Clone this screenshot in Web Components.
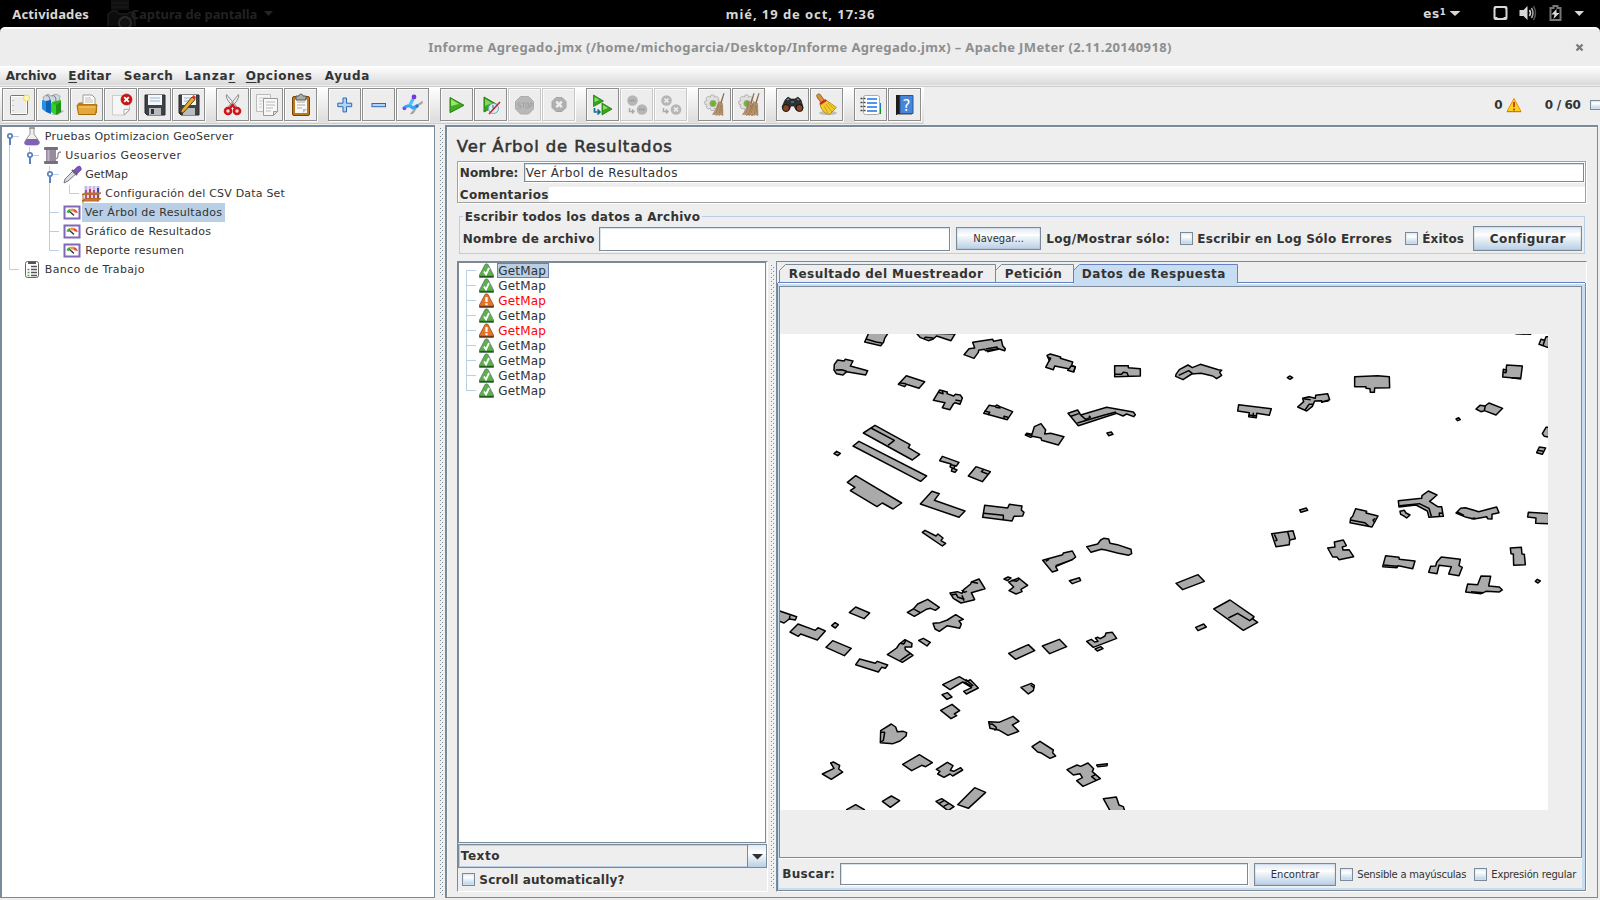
<!DOCTYPE html>
<html lang="es">
<head>
<meta charset="utf-8">
<title>Informe Agregado.jmx – Apache JMeter</title>
<style>
html,body{margin:0;width:1600px;height:900px;overflow:hidden;background:#000}
body{font:bold 12px/14px "DejaVu Sans",sans-serif;color:#333}
</style>
</head>
<body>
<desktop-bar></desktop-bar>
<jmeter-window></jmeter-window>
<script>
function define(name, css, html, init){
  const tpl=document.createElement('template');
  tpl.innerHTML='<style>:host{display:block;box-sizing:border-box}*{box-sizing:border-box}'+css+'</style>'+html;
  customElements.define(name,class extends HTMLElement{
    connectedCallback(){
      if(this.shadowRoot)return;
      this.attachShadow({mode:'open'}).appendChild(tpl.content.cloneNode(true));
      if(init)init(this,this.shadowRoot);
    }
  });
}

/* Text run fitted to an exact width by spreading its letters */
define('fit-text',':host{display:block;white-space:pre;flex:none}span{display:inline-block;margin-left:-.2px}','<span><slot></slot></span>',(el,root)=>{
  const w=+el.getAttribute('w'),x=el.getAttribute('x');
  el.style.width=w+'px';
  if(x)el.style.marginLeft=x+'px';
  const nat=root.querySelector('span').getBoundingClientRect().width;
  const n=el.textContent.length;
  el.style.letterSpacing=((w+.6-nat)/(n-1))+'px';
});

const gear='<path d="M14 7h3l.6 2.200 2.200-1 2 2-1 2.200 2.200.8v3l-2.200.8 1 2-2 2-2.200-.8-.6 2.300h-3l-.8-2.300-2.200.8-2-2 1-2-2.200-.8v-3l2.200-.8-1-2.200 2-2 2.200 1z" transform="translate(-1 0)" fill="#e0e0dc" stroke="#aaa" stroke-width=".8"/><circle cx="15" cy="15.500" r="3.200" fill="#68b825" stroke="#aaa" stroke-width=".8"/>';
const broom=(dx)=>`<g transform="translate(${dx} 0)"><path d="M25.500 5l1 .4-3.200 11-1.500-.5z" fill="#8a6a45"/><path d="M20.500 14l4 1.500.5 12-2.500-1-1 1-1.500-1-1.800 1-1-1.300-2.700.3c2.500-3 4.500-7 6-12.500z" fill="#b8946c" stroke="#8a6b4a" stroke-width=".5"/><path d="M21 16l-3 9M22.500 17l-1 8.500M23.700 17l.1 8" stroke="#8a6a46" stroke-width=".5"/></g>`;
const ICONS={
new:'<rect x="8.500" y="7.500" width="17" height="19" rx="1" fill="#ececec" stroke="#777"/><rect x="9.500" y="8.500" width="15" height="17" fill="none" stroke="#fff"/><path d="M11 12v1M11 17v1M11 22v1" stroke="#999"/><circle cx="24.500" cy="10" r="3" fill="#fdf6c4" stroke="#f0dd4a"/>',
templates:'<path d="M20 20l8 3-6 4h-6z" fill="#777" opacity=".5"/><path d="M7 9l5-3 3 2 5-2 4 2-1 6-8 3-7-4z" fill="#cfd8dc" stroke="#90a0a8" stroke-width=".8"/><path d="M10 8q4-2 4 6M16 8q4-2 4 6" stroke="#6f8088" stroke-width="1" fill="none"/><path d="M16 14l9-2v11l-6 3z" fill="#2ab81a"/><path d="M6 12l4 1v11l-4-3z" fill="#2a8fe0"/><path d="M10 13l5-1v14l-5-2z" fill="#0f62ba"/><path d="M15 15l5 2v10l-5-3z" fill="#35d02b"/><path d="M20 17l5-3v10l-5 3z" fill="#1d9213"/>',
open:'<path d="M13 17V7h9l3 3v9z" fill="#fff" stroke="#999"/><path d="M15 10h6M15 12h8M15 14h8" stroke="#bbb"/><path d="M8 15l4-1 1 2h14v9H8z" fill="#c58413"/><path d="M7 17h20l-1.500 9.500H8.500z" fill="#e5a63a" stroke="#a66a08"/><path d="M9 19h16" stroke="#f4cb79"/>',
close:'<path d="M8.500 7.500h17v15l-5 4.500h-12z" fill="#f6f6f6" stroke="#ccc"/><path d="M26 21l-6 .5V27z" fill="#fff" stroke="#aaa"/><circle cx="22.500" cy="11.500" r="5.500" fill="#cc1410" stroke="#a01010" stroke-width=".6"/><path d="M20.200 9.200l4.600 4.600M24.800 9.200l-4.600 4.600" stroke="#fff" stroke-width="1.900"/>',
save:'<path d="M7 7h20v20H9l-2-2z" fill="#3e4246" stroke="#26292b"/><rect x="10" y="7" width="14" height="10" fill="#f3f7fb"/><path d="M12 10h10M12 13h10" stroke="#9cb3ca"/><rect x="11" y="20" width="12" height="7" fill="#b9bcbf"/><rect x="13" y="21" width="3" height="5" fill="#333"/>',
saveas:'<path d="M7 7h20v20H9l-2-2z" fill="#3e4246" stroke="#26292b"/><rect x="10" y="7" width="14" height="10" fill="#f3f7fb"/><path d="M12 10h10M12 13h10" stroke="#9cb3ca"/><rect x="11" y="20" width="12" height="7" fill="#b9bcbf"/><path d="M8 26l2-5L20 9l3 2.500L12 24z" fill="#e4ab2e" stroke="#5d400b"/><path d="M20 9l1.500-2 2.500 2-1 2.500z" fill="#d33"/><path d="M8 26l.7-2 1.500 1z" fill="#000"/>',
cut:'<path d="M10.500 6.500c-1 3 2 8 8 13l2-1zM22.500 6.500c1 3-2 8-8 13l-2-1z" fill="#eee" stroke="#888"/><circle cx="12" cy="23" r="3" fill="#f6dada" stroke="#cf1517" stroke-width="2.600"/><circle cx="21" cy="23" r="3" fill="#f6dada" stroke="#cf1517" stroke-width="2.600"/><path d="M14 20l2.500-3 2.500 3" stroke="#cf1517" stroke-width="2.500" fill="none"/>',
copy:'<path d="M6.500 6.500h14v17h-14z" fill="#f5f5f5" stroke="#bbb"/><path d="M9 10h9M9 13h4M9 16h3M9 19h3" stroke="#ccc"/><path d="M13.500 10.500h14v13l-4 4h-10z" fill="#f7f7f7" stroke="#999"/><path d="M16 14h9M16 17h9M16 20h7M16 23h5" stroke="#bbb"/><path d="M27.500 23.500h-4v4z" fill="#ddd" stroke="#999"/>',
paste:'<rect x="8.500" y="8.500" width="17" height="19" rx="1.500" fill="#ba771b" stroke="#75450a"/><rect x="11" y="11" width="12" height="14" fill="#f8f8f8"/><path d="M13 14h8M13 17h8M13 20h5" stroke="#aaa"/><path d="M12 8h3c0-2.500 4-2.500 4 0h3v4H12z" fill="#aaa" stroke="#555"/><path d="M23 21h-4v4z" fill="#bbb"/>',
plus:'<path d="M15 10h3.500v5.200h5.200v3.500h-5.200v5.200H15v-5.200H9.800v-3.500H15z" fill="#b4d2f2" stroke="#2d69b3"/>',
minus:'<rect x="10" y="15.500" width="13.500" height="3.200" fill="#b4d2f2" stroke="#2d69b3"/>',
toggle:'<path d="M14 26c2-3 4-4 5-8l7-5q2 1 0 3l-4 2-4 7q-2 2-4 1z" fill="#a5a5a5"/><path d="M8 20q3-3 6-2l3 2 4-2" fill="none" stroke="#35a5ff" stroke-width="3.200" stroke-linecap="round"/><path d="M14 17l3-6" stroke="#4ec0ff" stroke-width="3.400"/><circle cx="18" cy="9" r="2.400" fill="#7437e5"/><circle cx="8.500" cy="20.500" r="1.800" fill="#8646e2"/><circle cx="21" cy="18" r="1.600" fill="#1e70e0"/>',
run:'<path d="M10 9.500l14 7.800-14 7.400z" fill="#3fae20" stroke="#287b10"/><path d="M11 11l8 5-8 2z" fill="#9be26b"/>',
runno:'<path d="M10 9l13.500 7.800L10 24z" fill="#3aa61d" stroke="#287b10"/><path d="M11 11l7 4-7 3z" fill="#85d65a"/><circle cx="19.500" cy="20.500" r="5" fill="#d9eef8" stroke="#6ab"/><path d="M19 17v3.500h2" fill="none" stroke="#367"/><path d="M15 26L26 14" stroke="#d12020" stroke-width="1.500"/>',
stop:'<path d="M12.500 8.500h8l5 5v7.500l-5 5h-8l-5-5v-7.500z" fill="#b8b8b8" stroke="#adadad"/><path d="M12.600 15H10v2.500h2.600V20H10M14 15h3M15.500 15v5M18 15h2.300v5H18zM22 20v-5h2v2.500h-2" stroke="#a0a0a0" stroke-width=".9" fill="none"/>',
shut:'<path d="M14 9.500h6l4 4v6l-4 4h-6l-4-4v-6z" fill="#b0b0b0" stroke="#a4a4a4"/><path d="M14.300 13.700l5.500 5.500M19.800 13.700l-5.500 5.500" stroke="#eee" stroke-width="2.500"/>',
remote:'<path d="M7.500 7l10 6-10 5.500zM16 15l10 6-10 6z" fill="#35a51b" stroke="#23780d" stroke-width=".8"/><path d="M8.500 9l5 3-5 2zM17 17l5 3-5 2z" fill="#8fdd62"/><path d="M8.500 20v4h5M11.500 21.500l2.500 2.500-2.500 2.500" fill="none" stroke="#14708a" stroke-width="1.700"/>',
rstop:'<circle cx="12.500" cy="12.500" r="5.300" fill="#b6b6b6"/><circle cx="22" cy="21.500" r="5.300" fill="#b6b6b6"/><path d="M9.500 12.500h6M19 21.500h6" stroke="#999" stroke-width="2" stroke-dasharray="1.200 .6"/><path d="M9.500 20v3.500h4M12 21.500l2 2-2 2" fill="none" stroke="#aaa" stroke-width="1.500"/>',
rshut:'<circle cx="12.500" cy="12.500" r="5.300" fill="#b6b6b6"/><circle cx="22" cy="21.500" r="5.300" fill="#b6b6b6"/><path d="M10.500 10.500l4 4M14.500 10.500l-4 4M20 19.500l4 4M24 19.500l-4 4" stroke="#eee" stroke-width="1.700"/><path d="M9.500 20v3.500h4M12 21.500l2 2-2 2" fill="none" stroke="#aaa" stroke-width="1.500"/>',
clear:gear+broom(0),
clearall:gear+broom(-4)+broom(1),
find:'<path d="M9 12l3-3 3 2h4l3-2 3 3 2 7-1 3h-6l-2-4h-3l-2 4H8l-2-3z" fill="#2d3133" stroke="#111" stroke-width=".6"/><circle cx="10" cy="20" r="3.500" fill="#864520" stroke="#111"/><circle cx="23.500" cy="20" r="3.500" fill="#864520" stroke="#111"/><path d="M11 12l2-1M21 11l2 1M15 14h3" stroke="#899" stroke-width="1.200"/>',
reset:'<ellipse cx="18" cy="25" rx="9" ry="2" fill="#bbb"/><path d="M6.500 7.500c1.500-2.500 4-1.500 4.500 0l3.500 5-3 2.500-4-5z" fill="#d99336" stroke="#8a5312" stroke-width=".8"/><path d="M10 16l6-4 10.500 7.500-7 7C14 25 11 22 10 16z" fill="#f4cb2c" stroke="#aa8209" stroke-width=".8"/><path d="M14 18l4 7M16 16l6 8M18 15l6 6" stroke="#b78f12" stroke-width=".7"/><path d="M10 16l6-4" stroke="#d3222a" stroke-width="2.500"/>',
func:'<path d="M24 15h3v5h-3z" fill="#1677ee"/><path d="M24 20h3v6h-3z" fill="#199024"/><rect x="9.500" y="7.500" width="16" height="19" rx="2" fill="#fff" stroke="#aaa"/><path d="M13 11h10M13 15h10M13 19h10M13 23h10" stroke="#1774ea" stroke-width="1.400"/><path d="M6.500 10.500h5M6.500 14.500h5M6.500 18.500h5M6.500 22.500h5" stroke="#444" stroke-width="1.700" stroke-dasharray="2 1"/>',
help:'<path d="M8 7h4v20H8z" fill="#1c1c1c"/><path d="M12 7.500h13v18H12z" fill="#4586d8" stroke="#28569a"/><path d="M9 26.500h15" stroke="#999"/><text x="14.500" y="22.500" font-size="15" font-family="DejaVu Sans" font-weight="400" fill="#fff">?</text>'
};
define('tool-button',':host{width:33px;height:33px;border:1px solid #8e8e8e;background:#ededed;box-shadow:1px 1px 0 #fff,inset 1px 1px 0 #fafafa;flex:none;margin-right:1px}:host([off]){border-color:#c8c8c8}svg{display:block;margin:-1px}','<svg width="33" height="33"></svg>',(el,r)=>{r.querySelector('svg').innerHTML=ICONS[el.getAttribute('icon')]});

define('desktop-bar',`:host{height:27px;background:#000;color:#d8d8d8;display:flex;align-items:center;font:bold 13px/20px "Noto Sans",sans-serif}
svg{flex:none}.ghost{color:#222}.kb{font:bold 12px/20px "DejaVu Sans",sans-serif}.kb span{position:relative;top:-3px;font-size:14px}`,`
<fit-text x="12.500" w="76">Actividades</fit-text>
<svg width="34" height="27" style="margin-left:17px"><path d="M5 0h18v10H5z" fill="#101010"/><path d="M5 3h18M5 7h18" stroke="#1c1c1c"/><path d="M2 26V14l4-3h5l2 3h8l3-2 5 1v13" fill="#0c0c0c" stroke="#262626"/><circle cx="19" cy="23" r="6" fill="#111" stroke="#2a2a2a" stroke-width="2"/></svg>
<fit-text class="ghost" x="-8.500" w="126">Captura de pantalla</fit-text>
<svg width="12" height="8" style="margin-left:6px"><path d="M1 1h9L5.500 6z" fill="#262626"/></svg>
<fit-text x="451" w="148">mié, 19 de oct, 17:36</fit-text>
<fit-text class="kb" x="549.500" w="22">es<span>₁</span></fit-text>
<svg width="154" height="27"><g fill="#d8d8d8" transform="translate(-.500 0)"><path d="M4 11h11l-5.500 5z"/><path fill-rule="evenodd" d="M50 6h10a2 2 0 012 2v10a2 2 0 01-2 2H50a2 2 0 01-2-2V8a2 2 0 012-2zm0 3v8h2v1h6v-1h2V9l-1-1h-8z"/><path d="M74 10h4l4-4v14l-4-4h-4z"/><path d="M84 10q2 3 0 6" stroke="#d8d8d8" stroke-width="1.500" fill="none"/><path d="M86 8q3 5 0 10" stroke="#aaa" stroke-width="1.500" fill="none"/><path d="M88 6q4 7 0 14" stroke="#555" stroke-width="1.500" fill="none"/><path d="M105 8h3V6h4v2h3v12h-10z" fill="none" stroke="#777" stroke-width="2"/><path d="M111 9l-5 5.500h3L108 19l6-6h-3z"/><path d="M129 11h9.500l-4.750 5z"/></g></svg>`);

define('window-title',`:host{height:39px;background:#ededed;border-top:2px solid #fff;border-radius:5px 5px 0 0;display:flex;align-items:center;color:#8d8f8f;font:bold 13px/18px "Noto Sans",sans-serif;padding-bottom:1px}svg{margin-left:404px}`,`
<fit-text x="428.500" w="742.500">Informe Agregado.jmx (/home/michogarcia/Desktop/Informe Agregado.jmx) – Apache JMeter (2.11.20140918)</fit-text>
<svg width="9" height="9"><path d="M1.500 1.500l6 6M7.500 1.500l-6 6" stroke="#777a7a" stroke-width="2.300"/></svg>`);

define('menu-strip',`:host{height:21px;background:linear-gradient(#fff,#dadada 19px,#eee 19px,#eee 20px,#ccc 20px);display:flex;align-items:center;padding-bottom:2px}u{text-underline-offset:2px;text-decoration-thickness:1px}`,`
<fit-text x="6" w="50">Archivo</fit-text><fit-text x="12.500" w="42"><u>E</u>ditar</fit-text><fit-text x="13.500" w="48.500">Search</fit-text><fit-text x="12.500" w="49">Lanza<u>r</u></fit-text><fit-text x="12" w="65.500"><u>O</u>pciones</fit-text><fit-text x="13.500" w="44">Ayuda</fit-text>`);

define('tool-strip',`:host{height:38px;background:#eee;display:flex;justify-content:space-between}
.bar{width:924px;height:37px;padding:1px 0 0 2px;display:flex;background:linear-gradient(#fff,#dcdcdc 35px,#fff 35px,#ccc 36px)}
i{width:10px;flex:none}.st{display:flex;align-items:center;height:37px;width:106px;overflow:hidden;padding-bottom:1px}
check-box{margin-left:9.500px;height:10px;margin-top:-1px}svg{flex:none;margin:-1px 0 0 3px}`,`
<div class="bar">${['new templates open close save saveas','cut copy paste','plus minus toggle','run runno -stop -shut','remote -rstop -rshut','clear clearall','find reset','func help'].map(g=>g.split(' ').map(n=>`<tool-button icon="${n.replace('-','')}"${n[0]=='-'?' off':''}></tool-button>`).join('')).join('<i></i>')}</div>
<div class="st"><fit-text x=".500" w="8">0</fit-text><svg width="16" height="16"><path d="M8 1.500L15 14.500H1z" fill="#ffd21c" stroke="#ee8a10" stroke-linejoin="round"/><path d="M1 14.700h14" stroke="#df6a08"/><path d="M8 5v5M8 11.500v2" stroke="#c84a06" stroke-width="2"/></svg><fit-text x="23.500" w="35.500">0 / 60</fit-text><check-box></check-box></div>`);

define('check-box',':host{width:13px;height:13px;border:1px solid #7a8a99;flex:none;background:linear-gradient(#dfeaf4,#fff 30%,#b8cfe5);box-shadow:inset 0 0 0 1px #dce8f388}','');
define('metal-button',':host{border:1px solid #7a8a99;flex:none;display:flex;align-items:center;justify-content:center;background:linear-gradient(#dfe9f3,#fff 35%,#f4f8fb 40%,#b8cfe5);box-shadow:inset 0 0 0 1px #7a8a9922}','<slot></slot>');
define('text-field',':host{border:1px solid #7a8a99;background:#fff;flex:none;display:flex;align-items:center;box-shadow:1px 1px 0 #fff,inset 1px 1px 0 #d8e2ec;font-weight:400}','<slot></slot>');
define('split-grip',`:host{flex:none;background:#eee}svg{display:block;width:4px;height:100%}`,'<svg><defs><pattern id="b" width="4" height="4" patternUnits="userSpaceOnUse"><path d="M1 1h1v1H1zM3 3h1v1H3z" fill="#fff"/><path d="M0 0h1v1H0zM2 2h1v1H2z" fill="#7a8a99"/></pattern></defs><rect width="4" height="100%" fill="url(#b)"/></svg>');

const gauge='<rect x="1.500" y="3.500" width="15" height="12" fill="#fff" stroke="#8068b8" stroke-width="2"/><path d="M3.500 9.500q.5-3 3.500-3.500l.5 2-2 2z" fill="#38b038"/><path d="M7 6q2-1 4.500 0L10 8.500H8z" fill="#f0943a"/><path d="M11.500 6q2.500 1 3.500 4l-3-.5-2-1.500z" fill="#e84c3a"/><path d="M6.500 8.500l4 3.500M8.500 10l2.500 2.500" stroke="#333" stroke-width="1.200"/>';
const TI={
flask:'<path d="M7 1v6L1.500 15q0 3 3 3h9q3 0 3-3L11 7V1z" fill="#eee" stroke="#999"/><path d="M3.500 12h11l2 4q-1 2-3 2h-9q-3 0-3-2z" fill="#8061b5"/><path d="M6 1h6" stroke="#777"/>',
spool:'<rect x="1" y="1" width="14" height="3" rx="1" fill="#776e7c"/><rect x="3" y="4" width="10" height="11" fill="#978c9e"/><path d="M5.500 4v11" stroke="#c0b5c6" stroke-width="2"/><rect x="1" y="15" width="14" height="3" rx="1" fill="#776e7c"/><path d="M12 13q3 0 3-4 0-3 3-3" fill="none" stroke="#938a99" stroke-width="1.300"/>',
drop:'<path d="M1 18l1-4L11 5l3 3-9 8z" fill="#dcd9e8" stroke="#777"/><path d="M9 5l5 5" stroke="#666" stroke-width="2"/><path d="M11 5l3-3q3-2 4 .5T17 6l-3 3z" fill="#7b55bb" stroke="#5c3ba0" stroke-width=".6"/>',
tubes:'<path d="M4 2v12M8 2v12M12 2v12M16 2v12" stroke="#c8b8e2" stroke-width="3"/><path d="M4 6v8" stroke="#8c60bb" stroke-width="2"/><path d="M8 5v9" stroke="#d8345c" stroke-width="2"/><path d="M12 6v8" stroke="#b34c9b" stroke-width="2"/><path d="M16 4v10" stroke="#3744c8" stroke-width="2"/><path d="M0 10.500l3-1.500h16l-3 1.500zM0 17l3-2.500h16L16 17z" fill="#cc7829" stroke="#b8682a"/><path d="M1 10v9M16 10v8" stroke="#b96520"/>',
gauge,
bench:'<rect x="2.500" y="1.500" width="13" height="16" rx="2" fill="#fff" stroke="#666"/><path d="M5 3h8" stroke="#555" stroke-width="2"/><path d="M8 6.500h6M8 9.500h6M8 12.500h6M8 15.500h6" stroke="#555" stroke-width="1.300"/><path d="M4.500 9.500h2M4.500 12.500h2M4.500 15.500h2" stroke="#55a555" stroke-width="1.500"/>'
};
define('tree-row',`:host{height:19px;display:flex;align-items:center;font:11px/15px "DejaVu Sans",sans-serif}svg{flex:none}div{height:19px;display:flex;align-items:center;padding:0 3.500px 0 1.500px}:host([sel]) div{background:#b8cfe5}`,'<svg width="19" height="19"></svg><div><slot></slot></div>',(el,r)=>{
 el.style.paddingLeft=el.getAttribute('pad')+'px';r.querySelector('svg').innerHTML=TI[el.getAttribute('icon')];
});
define('plan-tree',`:host{width:435px;height:773px;border:1px solid #7a8a99;border-width:2px 1px 1px 2px;background:#fff;position:relative}
.g{position:absolute;left:-2px;top:-2px}.r{position:relative}`,`
<svg class="g" width="90" height="160"><g stroke="#b8cfe5" fill="none"><path d="M9.500 14v130.500H19M12 11.500h7M29.500 22v10M32 30.500h7M49.500 41v84.500H59M52 49.500h7M49.500 87.500H59M49.500 106.500H59M69.500 60v8.500H79"/></g><g fill="#fff" stroke="#5b82c0" stroke-width="1.700"><path d="M10 13v7M30 32v7M50 51v7" stroke-width="2"/><circle cx="10" cy="11" r="2.200"/><circle cx="30" cy="30" r="2.200"/><circle cx="50" cy="49" r="2.200"/></g></svg>
<div class="r">
<tree-row pad="21" icon="flask"><fit-text x="1.500" w="188">Pruebas Optimizacion GeoServer</fit-text></tree-row>
<tree-row pad="41" icon="spool"><fit-text x="2" w="115">Usuarios Geoserver</fit-text></tree-row>
<tree-row pad="61" icon="drop"><fit-text x="2" w="42">GetMap</fit-text></tree-row>
<tree-row pad="80" icon="tubes"><fit-text x="3" w="179">Configuración del CSV Data Set</fit-text></tree-row>
<tree-row pad="61" sel icon="gauge"><fit-text x="1.500" w="136.500">Ver Árbol de Resultados</fit-text></tree-row>
<tree-row pad="61" icon="gauge"><fit-text x="2" w="125">Gráfico de Resultados</fit-text></tree-row>
<tree-row pad="61" icon="gauge"><fit-text x="2" w="98">Reporte resumen</fit-text></tree-row>
<tree-row pad="21" icon="bench"><fit-text x="1.500" w="99">Banco de Trabajo</fit-text></tree-row></div>`);

define('name-box',`:host{height:42px;border:1px solid #a0a0a0;box-shadow:1px 1px 0 #fff,inset 1px 1px 0 #fff;padding-top:1px}
.n{display:flex;height:19px;align-items:center;padding-left:2px}.c{display:flex;height:15px;margin-top:5px;padding-left:2px;align-items:center}
text-field{height:19px;width:1060px;margin-left:6px}.w{background:#fff;height:15px;flex:1;margin-left:1px}`,`
<div class="n"><fit-text w="58">Nombre:</fit-text><text-field><fit-text x="1" w="151">Ver Árbol de Resultados</fit-text></text-field></div>
<div class="c"><fit-text w="88">Comentarios</fit-text><div class="w"></div></div>`);

define('file-box',`:host{height:38px;border:1px solid #b8cfe5;position:relative;padding:9px 0 0 3px}
.l{position:absolute;left:3px;top:-7px;background:#eee;padding:0 2px}.r{display:flex;align-items:center;height:25px}.s{font:10px/13px "DejaVu Sans",sans-serif}`,`
<div class="l"><fit-text w="234.500">Escribir todos los datos a Archivo</fit-text></div>
<div class="r"><fit-text w="131">Nombre de archivo</fit-text><text-field style="width:351px;height:24px;margin-left:5px"></text-field>
<metal-button class="s" style="width:85px;height:23px;margin-left:6px"><fit-text w="50">Navegar...</fit-text></metal-button>
<fit-text x="5.500" w="123">Log/Mostrar sólo:</fit-text><check-box style="margin-left:10.500px"></check-box><fit-text x="4.500" w="194">Escribir en Log Sólo Errores</fit-text>
<check-box style="margin-left:13.500px"></check-box><fit-text x="4.500" w="41">Éxitos</fit-text>
<metal-button style="width:109px;height:25px;margin-left:9.500px"><fit-text w="75">Configurar</fit-text></metal-button></div>`);

define('sample-row',`:host{height:15px;display:flex;align-items:center;padding-left:20px;font:12px/14px "DejaVu Sans",sans-serif}
svg{flex:none}div{height:15px;width:52px;margin-left:2px;padding-left:.500px;border:1px solid transparent;display:flex;align-items:center}
:host([sel]) div{background:#b8cfe5;border-color:#6382bf}:host([bad]) div{color:#f00}`,`<svg width="16" height="15"></svg><div><fit-text w="47">GetMap</fit-text></div>`,(el,r)=>{
 const bad=el.hasAttribute('bad');
 r.querySelector('svg').innerHTML=`<path d="M6 1.500q1.500-1.300 3 0L14.500 12v2.300H.5V12z" fill="${bad?'#e5752a':'#5eb04a'}" stroke="${bad?'#8a4a30':'#5a7a78'}" stroke-width=".8" stroke-linejoin="round"/><path d="M.5 13.600h14" stroke="${bad?'#6e3510':'#245a1c'}" stroke-width="1.600"/>`+(bad?'<path d="M7.500 4v5M7.500 10.300v2" stroke="#fff" stroke-width="2.200"/>':'<path d="M5 8.500L7 11.500 10 5" fill="none" stroke="#fff" stroke-width="1.800"/>');
});
define('sample-list',`:host{width:311px;border:1px solid;border-color:#7a8a99 #fff #fff #7a8a99;flex:none}
.p{height:581px;border:1px solid #7a8a99;width:308px;background:#fff;position:relative}
.g{position:absolute;left:0;top:0}.r{position:relative}
.combo{width:309px;height:24px;margin-top:1px;border:1px solid #7a8a99;display:flex;align-items:center;box-shadow:inset 1px 1px 0 #b8cfe5,inset 0 -1px 0 #b8cfe5}
.b{width:19px;height:22px;border-left:1px solid #7a8a99;background:linear-gradient(#dfe9f3,#fff 35%,#b8cfe5);margin-left:auto}
.k{display:flex;align-items:center;height:23px;padding-left:4px}`,`
<div class="p"><svg class="g" width="20" height="135"><path d="M7.500 7v121M7.500 7.500H17M7.500 22.500H17M7.500 37.500H17M7.500 52.500H17M7.500 67.500H17M7.500 82.500H17M7.500 97.500H17M7.500 112.500H17M7.500 127.500H17" stroke="#b8cfe5" fill="none"/></svg>
<div class="r"><sample-row sel></sample-row><sample-row></sample-row><sample-row bad></sample-row><sample-row></sample-row><sample-row bad></sample-row><sample-row></sample-row><sample-row></sample-row><sample-row></sample-row><sample-row></sample-row></div></div>
<div class="combo"><fit-text x="2" w="38">Texto</fit-text><div class="b"><svg width="18" height="22"><path d="M4 9h11l-5.500 5.500z" fill="#333"/></svg></div></div>
<div class="k"><check-box></check-box><fit-text x="4.500" w="144.500">Scroll automatically?</fit-text></div>`);

/* Building footprints; each sheet is digitised at three units per map pixel.
   One building per line: outline first, then inner walls; * marks a separate annexe. */
const SHEETS=[
['translate(0 -14) scale(.33333)',`268,35 254,66 302,77 311,66 314,55 325,38|258,57 288,66 306,69|408,38 420,52 445,62 458,58 470,48 513,62 525,42|432,57 436,52 460,54
408,38 420,52 445,62 458,58 470,48 513,62 525,42|432,57 436,52 460,54
578,67 638,58 641,64 664,59 668,77 676,86 674,92 656,86 617,92 613,88 596,91 595,97 582,115 552,104 567,86 584,84|617,87 651,81 655,88 621,95
801,106 811,102 842,111 841,115 878,126 875,137 886,140 881,156 863,151 866,146 824,138 820,149 797,142 808,121|803,112 812,115 807,124|867,147 874,137 886,140 881,156
1004,137 1045,137 1045,143 1081,146 1081,168 1004,170|1004,163 1025,163 1030,157 1041,158 1045,168
163,133 173,120 192,123 196,118 219,123 211,138 263,152 257,165 200,155 189,165 169,161 162,150|167,150 185,149 200,154
379,167 434,185 417,205 379,193 374,200 355,193|357,188 378,191
479,210 502,216 501,221 521,228 526,223 541,225 547,234 540,253 525,248 520,252 510,269 487,263 495,248 460,241|476,217 489,221 487,210|526,240 542,243
627,256 645,259 650,255 660,260 698,275 682,299 611,280|613,273 629,277 624,285|672,296 672,289 684,292|646,262 662,264
864,280 893,270 902,285 980,262 1060,276 1066,284 1061,290 1040,282 1029,288 1010,280 895,317|873,289 896,281|892,309 971,286 1008,276|903,286 917,298 931,292 927,287
736,345 740,340 756,343 763,320 783,311 797,330 794,342 812,340 852,350 835,375 785,361 783,354 757,349 752,352|739,342 757,347
981,339 994,336 999,343 986,347
285,316 390,374 385,383 419,403 397,420 250,339|273,324 343,361 324,376
162,401 170,394 181,400 173,407
237,364 440,468 422,484 219,378
487,409 537,427 529,438 524,437 522,446 531,450 525,457 514,453 517,445 510,440 513,432 479,422|513,434 529,438|516,444 524,446
588,440 631,455 607,485 565,468|611,448 604,455 623,462
227,467 365,549 339,567 307,549 291,560 211,512 225,502 202,487
456,514 478,521 463,541 555,573 537,592 421,552
614,556 683,564 688,553 726,558 724,570 732,577 728,588 702,589 696,603 608,592|611,580 670,586 670,599
427,637 435,631 468,648 474,642 489,654 483,662 497,670 487,678
788,721 848,704 850,699 877,693 887,711 877,719 827,740 833,751 817,756|797,724 807,718|827,737 877,719
920,680 953,672 962,660 971,655 986,657 990,670 1012,674 1053,688 1055,701 1045,706 1012,699 977,690 964,688 933,697`],
['translate(390 -14) scale(.33333)',`18,163 28,149 54,135 67,143 91,133 145,149 155,151 149,157 155,166 140,176 128,168 93,160 65,162 39,179 17,169|26,166 56,152 68,161
352,173 359,168 368,173 360,178
206,254 304,266 298,286 260,280 259,293 236,290 238,278 203,273|236,285 260,288|250,278 250,291
383,261 401,245 398,235 417,230 436,235 437,226 473,221 479,239 455,247 455,242 434,243 427,259 410,273|400,236 422,239|430,253 417,253 405,270|454,245 476,243
554,170 623,167 658,170 659,203 614,204 613,217 601,217 600,206 588,205 588,200 554,200
1010,135 1057,138 1052,177 1024,173 998,171 1000,148 1008,150|999,156 1008,158 1010,149|1024,174 1052,174
957,249 998,265 978,285 943,272 933,275 918,267 930,256 945,258|943,272 946,257
858,297 866,293 871,299 863,302
1037,41 1082,43 1080,34 1037,34
1128,50 1124,61 1113,58 1107,73 1136,83 1136,50|1119,77 1124,61
1136,322 1128,322 1117,341 1123,349 1136,351
1108,381 1127,384 1117,403 1100,398|1103,391 1120,394
389,570 409,564 413,571 393,577
557,566 590,574 588,579 624,588 606,621 540,608 542,595 548,589|541,600 584,608 596,618|616,595 609,600 614,608
685,542 755,535 756,527 775,513 801,525 779,544 803,560 815,560 820,589 777,592 772,573 738,555 687,561|688,557 748,551 777,565 784,589|818,580 808,579 808,589|*690,574 703,571 708,579 720,585 710,594 700,587 692,583
858,579 872,565 886,563 912,571 926,575 980,561 987,578 966,583 966,597 953,596 950,590 912,597 889,592|862,576 882,586|904,596 916,594
1075,577 1136,581 1136,611 1097,610 1098,594 1073,591
305,641 369,632 376,656 359,660 358,674 318,680|313,643 321,660 316,663|353,635 359,658
493,666 520,660 529,677 517,681 519,690 537,689 551,710 507,719 501,711 488,711 473,684 495,681
647,707 687,712 688,718 735,723 728,746 685,737 681,743 638,740|641,735 680,739 684,737
814,711 871,718 867,737 877,742 867,767 836,762 844,740 807,736 801,761 776,757 782,739 797,738 800,727
1021,684 1054,682 1056,702 1063,703 1066,734 1031,736 1030,702 1023,701
933,768 962,769 956,798 988,801 997,810 988,816 948,814 933,821 887,816 893,792 923,794|903,815 941,818
1096,784 1102,778 1111,783 1104,789
18,790 84,764 103,784 38,809
180,840 252,890 248,897 263,907 220,931 131,867|175,894 203,880 239,902 252,892
77,922 101,912 109,921 84,932`],
['translate(-10 226) scale(.33333)',`20,150 80,170 76,180 58,177 42,189 20,181|60,166 58,178
84,192 136,211 144,203 166,213 142,240 92,222 85,229 60,216
185,197 195,188 205,194 196,204
257,141 299,159 282,176 238,158
188,242 244,265 223,287 168,262
269,297 316,310 322,304 353,315 346,325 335,322 325,336 257,314
412,157 430,147 443,132 473,118 508,142 496,151 482,145 469,148 433,169|433,148 451,158
489,190 510,188 532,180 557,164 580,178 567,183 574,192 569,205 532,197 508,214 495,207
540,99 562,95 576,100 582,88 602,72 604,66 627,57 645,86 604,98 614,119 573,129 550,115|604,66 624,70|545,105 558,102 564,112 583,118|575,90 583,97 591,94|582,122 576,106
702,57 714,51 723,54 712,62
716,66 746,54 773,76 753,88 756,95 738,102 717,92 731,81|724,61 739,64 748,57
898,62 928,53 932,62 907,71
352,284 380,264 388,252 405,239 426,250 425,261 405,261 406,269 429,286 397,307|390,250 401,252 407,243|391,301 421,280
446,241 460,235 481,247 471,258
716,280 775,254 794,272 737,298
817,258 868,238 890,260 839,281
950,244 964,238 974,246 984,244 976,234 984,232 991,236 1005,228 1008,219 1027,217 1040,235 970,262
975,267 992,260 999,266 982,273
518,374 568,350 592,364 601,359 625,384 589,402 581,394 605,383 578,366 540,389|583,366 606,379|587,358 610,378
516,404 532,398 546,411 531,418
512,451 546,433 569,452 553,462 560,467 543,476
753,382 784,370 793,376 790,392 775,402|782,375 793,384
656,485 687,487 729,469 747,484 727,495 746,514 714,526 688,511 660,505|657,492 668,493 678,501 680,508 672,510
331,548 332,512 364,492 377,501 382,515 400,514 410,518 408,528 390,543 369,551|333,517 344,517 340,542 333,545
786,560 810,544 850,570 848,578 857,588 840,595 812,578 803,576
182,609 190,606 209,616 206,627 218,636 184,658 157,642 192,625
398,613 448,584 487,608 467,620 455,616 425,632
499,628 532,607 549,617 541,631 551,634 572,623 578,630 548,648 540,642 522,652 503,642 510,634
891,629 921,615 932,619 954,609 971,626 967,635 991,656 939,679 920,662 937,653 930,641 910,645|979,661 965,650 977,643
980,615 1012,611 1011,617 983,620
1000,716 1039,711 1047,735 1060,740 1064,752 1020,752
614,683 647,697 595,745 563,734
498,724 515,716 552,740 534,752|508,730 523,721|521,739 536,731
337,724 364,708 389,722 361,742
230,749 257,734 283,749 283,754 230,754`]
];
SHEETS[0][1]=SHEETS[0][1].replace('|408,38 420,52 445,62 458,58 470,48 513,62 525,42|432,57 436,52 460,54','');
define('map-view',':host{background:#fff;width:768px;height:476px;overflow:hidden}svg{display:block}','<svg width="768" height="476"></svg>',(el,r)=>{
 r.querySelector('svg').innerHTML=SHEETS.map(([t,s])=>`<g transform="${t}" fill="#aaa" stroke="#000" stroke-width="4.500" stroke-linejoin="round">`+s.split('\n').map(l=>l.split('|').map((p,i)=>i&&p[0]!='*'?`<polyline fill="none" points="${p}"/>`:`<polygon points="${p.replace('*','')}"/>`).join('')).join('')+'</g>').join('');
});

define('tab-strip',`:host{height:21px;display:flex;align-items:flex-end;position:relative;padding-left:2px}
svg{position:absolute;left:0;top:0}.t{position:relative;height:21px;display:flex;align-items:center;padding-top:2px}`,`
<svg width="809" height="24"><rect x="1" y="21" width="807" height="3" fill="#c8ddf2"/><path d="M460.500 2.500v20H296.500V8.500l6-6z" fill="#c8ddf2"/><path d="M1 21.500h295M461 21.500h347" stroke="#fff"/><path d="M1 20.500h296M460 20.500h348" stroke="#6382bf"/><path d="M2.500 20V8.500l6-6H218.500V20M218.500 8.500l6-6h72V20" fill="none" stroke="#7a8a99"/><path d="M296.500 20V8.500l6-6H460.500v18" fill="none" stroke="#6382bf"/></svg>
<div class="t"><fit-text x="10" w="193.500">Resultado del Muestreador</fit-text><fit-text x="22.500" w="56.500">Petición</fit-text><fit-text x="20.500" w="143">Datos de Respuesta</fit-text></div>`);
define('result-pane',`:host{width:811px;border:1px solid;border-color:#7a8a99 #fff #fff #7a8a99;flex:none}
.frame{border-left:1px solid #6382bf;border-right:1px solid #7a8a99;border-bottom:1px solid #7a8a99;width:809px;height:608px}
.in{border:solid #c8ddf2;border-width:3px 3px 2px 1px;height:607px}
.img{height:572px;border:1px solid #7a8a99;padding-top:47px;box-shadow:0 1px #fff}
.s{display:flex;align-items:center;height:28px;margin-top:2px;padding-left:3.500px}.x{font:10px/13px "DejaVu Sans",sans-serif}`,`
<tab-strip></tab-strip><div class="frame"><div class="in"><div class="img"><map-view></map-view></div>
<div class="s"><fit-text w="52">Buscar:</fit-text><text-field style="width:408px;height:22px;margin-left:5.500px"></text-field><metal-button class="x" style="width:82px;height:23px;margin-left:6px"><fit-text w="48">Encontrar</fit-text></metal-button><check-box style="margin-left:4px"></check-box><fit-text class="x" x="4.500" w="108.500">Sensible a mayúsculas</fit-text><check-box style="margin-left:8px"></check-box><fit-text class="x" x="4.500" w="84.500">Expresión regular</fit-text></div></div></div>`);

define('result-panel',`:host{width:1153px;height:773px;border:1px solid #7a8a99;border-width:2px 1px 1px 2px;background:#eee;padding-left:10px;box-shadow:inset 1px 1px 0 #fff8}
h1{margin:0;height:34px;padding-top:9px;font:400 16.500px/21px "DejaVu Sans",sans-serif;-webkit-text-stroke:.55px #333}
name-box{width:1129px}file-box{margin:13px 0 0 2px;width:1126px}.sp{display:flex;margin-top:7px;height:631px}`,`
<h1><fit-text w="214.500">Ver Árbol de Resultados</fit-text></h1><name-box></name-box><file-box></file-box>
<div class="sp"><sample-list></sample-list><split-grip style="width:8px;padding:4px 1px 4px 3px"></split-grip><result-pane></result-pane></div>`);

define('jmeter-window',`:host{height:873px;display:flex;flex-direction:column;background:#000}
.main{display:flex;height:775px;background:#eee}`,`
<window-title></window-title><menu-strip></menu-strip><tool-strip></tool-strip>
<div class="main"><plan-tree></plan-tree><split-grip style="width:10px;padding:3px 1px 4px 5px"></split-grip><result-panel></result-panel></div>`);
</script>
</body>
</html>
